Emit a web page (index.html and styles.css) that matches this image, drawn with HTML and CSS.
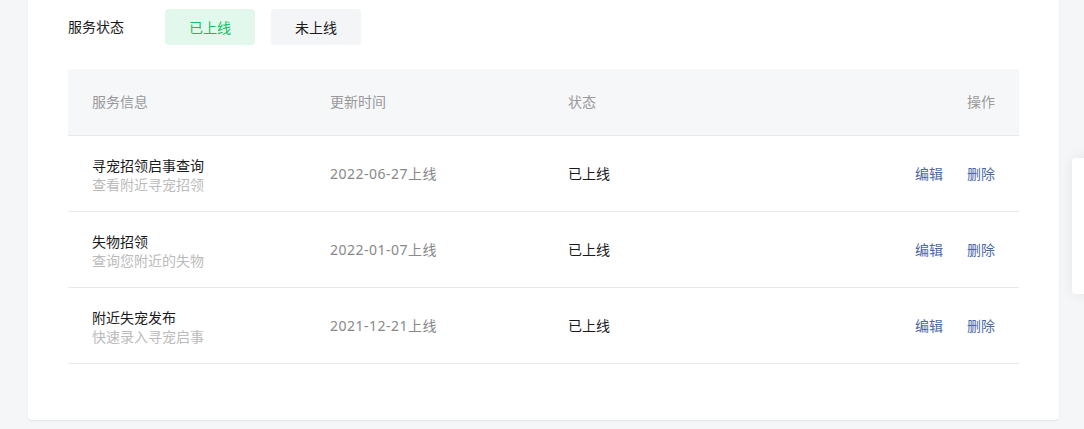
FILE: index.html
```html
<!DOCTYPE html>
<html lang="zh-CN">
<head>
<meta charset="utf-8">
<title>服务状态</title>
<link rel="stylesheet" href="styles.css">
</head>
<body>
<div class="page">
  <div class="card">
    <div class="filter">
      <span class="filter-label">服务状态</span>
      <button class="tab tab-active">已上线</button>
      <button class="tab">未上线</button>
    </div>
    <div class="table">
      <div class="row head">
        <div class="cell c1">服务信息</div>
        <div class="cell c2">更新时间</div>
        <div class="cell c3">状态</div>
        <div class="cell c4">操作</div>
      </div>
      <div class="row">
        <div class="cell c1 info"><div class="title">寻宠招领启事查询</div><div class="sub">查看附近寻宠招领</div></div>
        <div class="cell c2 date">2022-06-27上线</div>
        <div class="cell c3 status">已上线</div>
        <div class="cell c4 actions"><a>编辑</a><a>删除</a></div>
      </div>
      <div class="row">
        <div class="cell c1 info"><div class="title">失物招领</div><div class="sub">查询您附近的失物</div></div>
        <div class="cell c2 date">2022-01-07上线</div>
        <div class="cell c3 status">已上线</div>
        <div class="cell c4 actions"><a>编辑</a><a>删除</a></div>
      </div>
      <div class="row">
        <div class="cell c1 info"><div class="title">附近失宠发布</div><div class="sub">快速录入寻宠启事</div></div>
        <div class="cell c2 date">2021-12-21上线</div>
        <div class="cell c3 status">已上线</div>
        <div class="cell c4 actions"><a>编辑</a><a>删除</a></div>
      </div>
    </div>
  </div>
  <div class="side-panel"></div>
</div>
</body>
</html>
```

FILE: styles.css
```css
* { box-sizing: border-box; }
html, body { margin: 0; padding: 0; }
body {
  background: #f5f6f8;
  font-family: "Noto Sans", "Noto Sans CJK SC", sans-serif;
  font-size: 14px;
  color: #1a1a1a;
  width: 1084px;
  height: 429px;
  overflow: hidden;
}
.page {
  position: relative;
  padding-left: 28px;
  height: 429px;
}
.card {
  width: 1031px;
  background: #fff;
  border-radius: 0 0 4px 4px;
  box-shadow: 0 1px 2px rgba(0, 0, 0, 0.08);
  padding: 9px 40px 56px 40px;
}
.filter {
  display: flex;
  align-items: center;
  height: 36px;
}
.filter-label {
  width: 97px;
  line-height: 20px;
  color: #1a1a1a;
}
.tab {
  width: 90px;
  height: 36px;
  border: none;
  border-radius: 4px;
  background: #f4f5f7;
  color: #1a1a1a;
  font-family: inherit;
  font-size: 14px;
  padding: 0;
  margin-right: 16px;
}
.tab-active {
  background: #e3f8ec;
  color: #17bf63;
}
.table {
  margin-top: 24px;
  width: 951px;
}
.row {
  display: flex;
  align-items: center;
  height: 76px;
  border-bottom: 1px solid #e8e8e8;
  padding: 0 24px 1px;
}
.row.head {
  height: 67px;
  background: #f6f7f9;
  color: #999;
}
.cell { line-height: 19px; }
.info { padding-top: 3px; }
.c1, .c2, .c3 { width: 238px; flex: none; }
.c4 { flex: 1; text-align: right; }
.title { color: #1a1a1a; }
.sub { color: #bbb; }
.date { color: #888; letter-spacing: 0.5px; }
.status { color: #1a1a1a; }
.actions {
  display: flex;
  justify-content: flex-end;
  gap: 24px;
}
.actions a {
  color: #4c68a3;
  cursor: pointer;
}
.side-panel {
  position: absolute;
  left: 1072px;
  top: 158px;
  width: 40px;
  height: 136px;
  background: #fff;
  border-radius: 4px;
  box-shadow: 0 0 14px rgba(0, 0, 0, 0.07);
}
```
